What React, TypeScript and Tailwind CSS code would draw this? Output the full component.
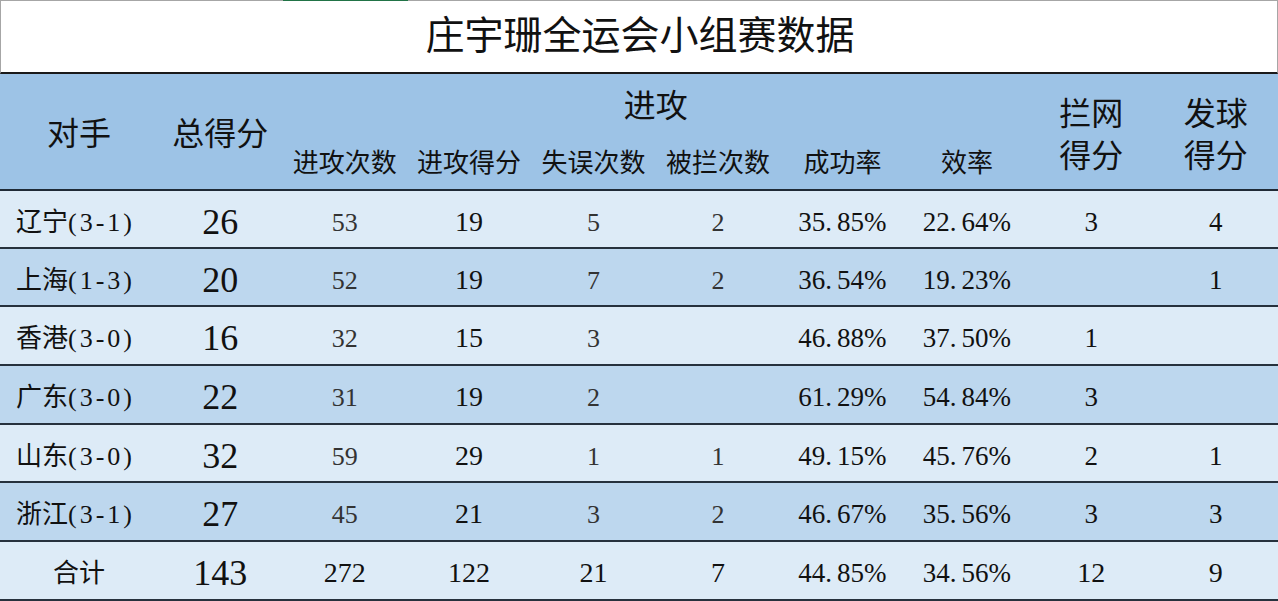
import React from 'react';

const cjk = { fontFamily: '"Liberation Serif", "Noto Sans CJK SC", serif' };

type Row = {
  team: string;
  score: string;
  total: string;
  attempts: string;
  points: string;
  errors: string;
  blocked: string;
  success: string;
  efficiency: string;
  block: string;
  serve: string;
};

const rows: Row[] = [
  { team: '辽宁', score: '(3-1)', total: '26', attempts: '53', points: '19', errors: '5', blocked: '2', success: '35.85%', efficiency: '22.64%', block: '3', serve: '4' },
  { team: '上海', score: '(1-3)', total: '20', attempts: '52', points: '19', errors: '7', blocked: '2', success: '36.54%', efficiency: '19.23%', block: '', serve: '1' },
  { team: '香港', score: '(3-0)', total: '16', attempts: '32', points: '15', errors: '3', blocked: '', success: '46.88%', efficiency: '37.50%', block: '1', serve: '' },
  { team: '广东', score: '(3-0)', total: '22', attempts: '31', points: '19', errors: '2', blocked: '', success: '61.29%', efficiency: '54.84%', block: '3', serve: '' },
  { team: '山东', score: '(3-0)', total: '32', attempts: '59', points: '29', errors: '1', blocked: '1', success: '49.15%', efficiency: '45.76%', block: '2', serve: '1' },
  { team: '浙江', score: '(3-1)', total: '27', attempts: '45', points: '21', errors: '3', blocked: '2', success: '46.67%', efficiency: '35.56%', block: '3', serve: '3' },
];

const heights = ['h-[58px]', 'h-[58px]', 'h-[59px]', 'h-[59px]', 'h-[58px]', 'h-[59px]'];

const cols = 'grid grid-cols-[158px_repeat(9,minmax(0,1fr))]';

function Pct({ value }: { value: string }) {
  const [a, b] = value.split('.');
  return (
    <span className="text-[27px] text-[#111]">
      {a}.<span className="ml-[5px]">{b}</span>
    </span>
  );
}

function DataRow({ row, dark, height }: { row: Row; dark: boolean; height: string }) {
  return (
    <div
      className={`${cols} ${height} items-center pt-[4px] border-b-2 border-[#26313d] ${dark ? 'bg-[#bdd7ee]' : 'bg-[#ddebf7]'}`}
    >
      <div className="pl-[16px] text-[26px] text-[#111] whitespace-nowrap">
        {row.team}
        <span className="tracking-[3px]">{row.score}</span>
      </div>
      <div className="text-center text-[36px] text-[#111]">{row.total}</div>
      <div className="text-center text-[26px] text-[#333]">{row.attempts}</div>
      <div className="text-center text-[28px] text-[#111]">{row.points}</div>
      <div className="text-center text-[26px] text-[#333]">{row.errors}</div>
      <div className="text-center text-[26px] text-[#333]">{row.blocked}</div>
      <div className="text-center"><Pct value={row.success} /></div>
      <div className="text-center"><Pct value={row.efficiency} /></div>
      <div className="text-center text-[27px] text-[#111]">{row.block}</div>
      <div className="text-center text-[27px] text-[#111]">{row.serve}</div>
    </div>
  );
}

export default function App() {
  return (
    <div className="w-[1278px] h-[601px] overflow-hidden bg-white" style={cjk}>
      {/* sheet tab edge */}
      <div className="flex h-px bg-[#a6a6a6]">
        <div className="w-[283px]" />
        <div className="w-[125px] bg-[#217346]" />
      </div>

      <div className="h-[73px] border-l border-r border-[#a6a6a6] flex items-center justify-center border-b-2 border-b-[#1a1a1a]">
        <span className="text-[39px] text-[#111] pl-[2px]">庄宇珊全运会小组赛数据</span>
      </div>

      {/* header */}
      <div className={`${cols} grid-rows-[58px_57px] h-[117px] bg-[#9dc3e6] border-b-2 border-[#1f2a36] text-[#111]`}>
        <div className="row-span-2 flex items-center justify-center text-[32px] pt-[4px]">对手</div>
        <div className="row-span-2 flex items-center justify-center text-[32px] pt-[4px]">总得分</div>
        <div className="col-span-6 flex items-end justify-center pb-[2px] text-[32px]">进攻</div>
        <div className="row-span-2 flex flex-col items-center justify-center text-[32px] leading-[42px] pt-[6px]">
          <span>拦网</span>
          <span>得分</span>
        </div>
        <div className="row-span-2 flex flex-col items-center justify-center text-[32px] leading-[42px] pt-[6px]">
          <span>发球</span>
          <span>得分</span>
        </div>
        <div className="flex items-center justify-center text-[26px] whitespace-nowrap pt-[6px]">进攻次数</div>
        <div className="flex items-center justify-center text-[26px] whitespace-nowrap pt-[6px]">进攻得分</div>
        <div className="flex items-center justify-center text-[26px] whitespace-nowrap pt-[6px]">失误次数</div>
        <div className="flex items-center justify-center text-[26px] whitespace-nowrap pt-[6px]">被拦次数</div>
        <div className="flex items-center justify-center text-[26px] whitespace-nowrap pt-[6px]">成功率</div>
        <div className="flex items-center justify-center text-[26px] whitespace-nowrap pt-[6px]">效率</div>
      </div>

      {rows.map((row, i) => (
        <DataRow key={row.team} row={row} dark={i % 2 === 1} height={heights[i]} />
      ))}

      {/* total */}
      <div className={`${cols} h-[59px] items-center pt-[4px] border-b-2 border-[#26313d] bg-[#ddebf7] text-[#111]`}>
        <div className="text-center text-[26px]">合计</div>
        <div className="text-center text-[36px]">143</div>
        <div className="text-center text-[28px]">272</div>
        <div className="text-center text-[28px]">122</div>
        <div className="text-center text-[28px]">21</div>
        <div className="text-center text-[28px]">7</div>
        <div className="text-center"><Pct value="44.85%" /></div>
        <div className="text-center"><Pct value="34.56%" /></div>
        <div className="text-center text-[28px]">12</div>
        <div className="text-center text-[28px]">9</div>
      </div>
    </div>
  );
}
